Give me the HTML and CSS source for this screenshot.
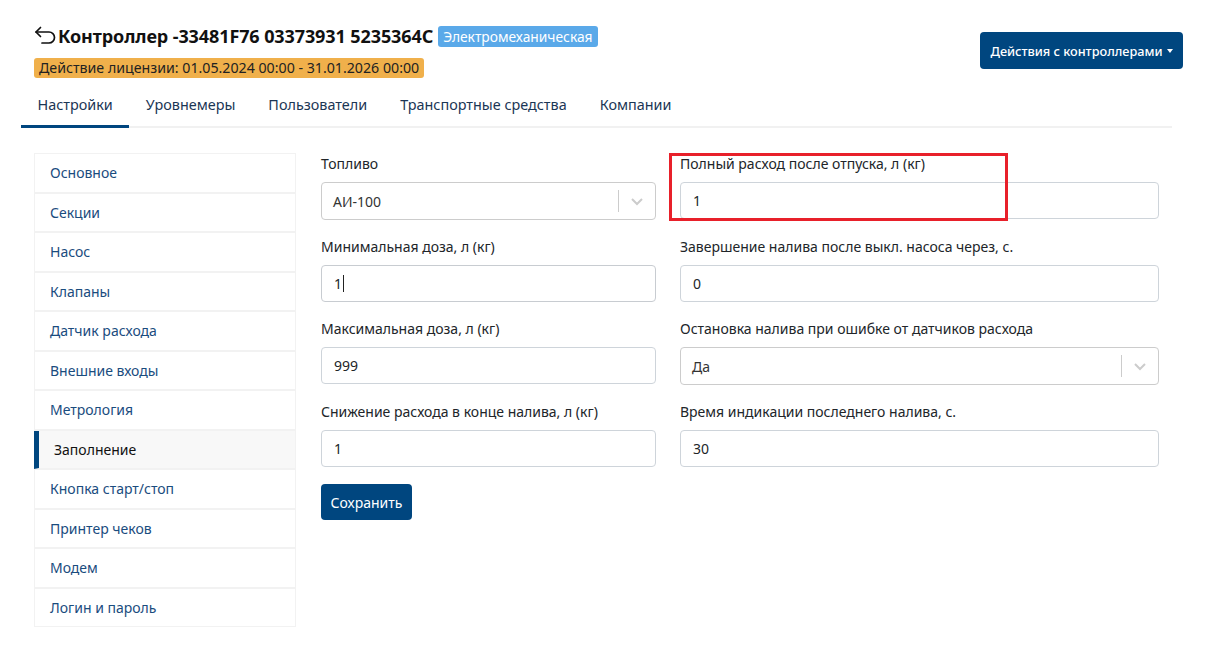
FILE: index.html
```html
<!DOCTYPE html>
<html lang="ru">
<head>
    <meta charset="UTF-8">
    <title>Контроллер</title>
    <link rel="stylesheet" href="styles.css">
</head>
<body>
    <div class="page">
        <div class="header">
            <div class="header-info">
                <div class="title-row">
                    <svg class="back-icon" width="23" height="20" viewBox="0 0 23 20" fill="none" stroke="#111" stroke-width="1.7" stroke-linecap="round" stroke-linejoin="round">
                        <path d="M2 6h13a5.5 5.5 0 0 1 0 11H8"/>
                        <path d="M6.5 1.5L2 6l4.5 4.5"/>
                    </svg>
                    <h1>Контроллер -33481F76 03373931 5235364C</h1>
                    <span class="badge badge-info">Электромеханическая</span>
                </div>
                <span class="badge badge-warning">Действие лицензии: 01.05.2024 00:00 - 31.01.2026 00:00</span>
            </div>
            <button class="btn btn-primary dropdown">Действия с контроллерами</button>
        </div>

        <div class="tabs">
            <a class="tab active">Настройки</a>
            <a class="tab">Уровнемеры</a>
            <a class="tab">Пользователи</a>
            <a class="tab">Транспортные средства</a>
            <a class="tab">Компании</a>
        </div>

        <div class="content">
            <ul class="side-menu">
                <li>Основное</li>
                <li>Секции</li>
                <li>Насос</li>
                <li>Клапаны</li>
                <li>Датчик расхода</li>
                <li>Внешние входы</li>
                <li>Метрология</li>
                <li class="active">Заполнение</li>
                <li>Кнопка старт/стоп</li>
                <li>Принтер чеков</li>
                <li>Модем</li>
                <li>Логин и пароль</li>
            </ul>

            <form class="settings-form">
                <div class="form-grid">
                    <div class="form-group">
                        <label>Топливо</label>
                        <div class="select">
                            <span class="select-value">АИ-100</span>
                            <span class="select-sep"></span>
                            <svg class="select-arrow" width="20" height="20" viewBox="0 0 20 20"><path d="M5 8l5 5 5-5" fill="none" stroke="#ccc" stroke-width="2"/></svg>
                        </div>
                    </div>
                    <div class="form-group">
                        <label>Полный расход после отпуска, л (кг)</label>
                        <input class="input" type="text" value="1">
                        <div class="highlight-box"></div>
                    </div>

                    <div class="form-group">
                        <label>Минимальная доза, л (кг)</label>
                        <div class="input focused">1<span class="caret"></span></div>
                    </div>
                    <div class="form-group">
                        <label>Завершение налива после выкл. насоса через, с.</label>
                        <input class="input" type="text" value="0">
                    </div>

                    <div class="form-group">
                        <label>Максимальная доза, л (кг)</label>
                        <input class="input" type="text" value="999">
                    </div>
                    <div class="form-group">
                        <label>Остановка налива при ошибке от датчиков расхода</label>
                        <div class="select">
                            <span class="select-value">Да</span>
                            <span class="select-sep"></span>
                            <svg class="select-arrow" width="20" height="20" viewBox="0 0 20 20"><path d="M5 8l5 5 5-5" fill="none" stroke="#ccc" stroke-width="2"/></svg>
                        </div>
                    </div>

                    <div class="form-group">
                        <label>Снижение расхода в конце налива, л (кг)</label>
                        <input class="input" type="text" value="1">
                    </div>
                    <div class="form-group">
                        <label>Время индикации последнего налива, с.</label>
                        <input class="input" type="text" value="30">
                    </div>
                </div>
                <button type="button" class="btn btn-primary">Сохранить</button>
            </form>
        </div>
    </div>
</body>
</html>
```

FILE: styles.css
```css
body {
    margin: 0;
    font-family: "Noto Sans", "Open Sans", sans-serif;
    color: #212529;
    background: #fff;
}
.page {
    padding: 22px 30px 0 21px;
}
.header {
    display: flex;
    justify-content: space-between;
    align-items: flex-start;
    padding-left: 13px;
}
.header-info {
    display: flex;
    flex-direction: column;
    align-items: flex-start;
}
.title-row {
    display: flex;
    align-items: center;
    height: 28px;
}
.back-icon {
    margin-right: 1px;
}
h1 {
    margin: 0;
    font-size: 18px;
    font-weight: 700;
    letter-spacing: -0.1px;
    color: #111;
}
.badge {
    display: inline-block;
    border-radius: 3px;
    white-space: nowrap;
}
.badge-info {
    background: #5aa9e9;
    color: #fff;
    margin-left: 5px;
    padding: 0 5px;
    font-size: 13.8px;
    line-height: 21px;
}
.badge-warning {
    background: #f0b04b;
    color: #222;
    margin-top: 8px;
    padding: 0 5px;
    font-size: 14.2px;
    line-height: 20px;
}
.btn {
    font-family: inherit;
    border: none;
    border-radius: 4px;
    cursor: pointer;
    color: #fff;
    white-space: nowrap;
}
.btn-primary {
    background: #00467f;
}
.dropdown {
    margin-top: 10px;
    height: 37px;
    width: 203px;
    padding: 0;
    font-size: 12.7px;
    font-weight: 500;
}
.dropdown::after {
    content: "";
    display: inline-block;
    margin-left: 4px;
    vertical-align: 3px;
    border-top: 4px solid #fff;
    border-left: 3.5px solid transparent;
    border-right: 3.5px solid transparent;
}
.tabs {
    display: flex;
    margin-top: 10px;
    margin-right: 11px;
    border-bottom: 2px solid #f1f1f1;
}
.tab {
    padding: 0 16.5px;
    height: 37px;
    line-height: 33px;
    font-size: 14.4px;
    color: #1b3655;
    border-bottom: 3px solid transparent;
    margin-bottom: -2px;
}
.tab.active {
    border-bottom-color: #00467f;
}
.content {
    display: flex;
    padding: 25px 24px 30px 13px;
    gap: 25px;
}
.side-menu {
    list-style: none;
    margin: 0;
    padding: 0;
    width: 262px;
    flex-shrink: 0;
}
.side-menu li {
    height: 37.5px;
    line-height: 37.5px;
    padding-left: 15px;
    font-size: 14px;
    color: #1a4c7e;
    border: 1px solid #f2f2f2;
}
.side-menu li + li {
    border-top: none;
    box-shadow: 0 -1px 0 #f2f2f2;
    margin-top: 1px;
}
.side-menu li.active {
    background: #f8f8f8;
    color: #111;
    border-left: 5px solid #00467f;
    padding-left: 15px;
}
.settings-form {
    flex: 1;
}
.form-grid {
    display: grid;
    grid-template-columns: 335fr 479fr;
    column-gap: 24px;
}
.form-group {
    position: relative;
    margin-bottom: 16px;
}
.form-group label {
    display: block;
    font-size: 14px;
    line-height: 21px;
    margin-bottom: 8px;
}
.input {
    box-sizing: border-box;
    display: block;
    width: 100%;
    height: 37px;
    padding: 0 12px;
    border: 1px solid #ced4da;
    border-radius: 4px;
    font-family: inherit;
    font-size: 14px;
    line-height: 35px;
    color: #212529;
    background: #fff;
}
.input.focused {
    border-color: #c8ccd1;
}
.caret {
    display: inline-block;
    width: 1px;
    height: 17px;
    background: #222;
    vertical-align: -3px;
    margin-left: 1px;
}
.select {
    box-sizing: border-box;
    display: flex;
    align-items: center;
    height: 38px;
    border: 1px solid #ccc;
    border-radius: 4px;
    padding-left: 11px;
    font-size: 14px;
}
.select-value {
    flex: 1;
    color: #333;
}
.select-sep {
    width: 1px;
    height: 22px;
    background: #ccc;
}
.select-arrow {
    margin: 0 8px;
}
.highlight-box {
    position: absolute;
    left: -11px;
    top: 0;
    width: 333px;
    height: 62px;
    border: 3px solid #e8202a;
    pointer-events: none;
}
.settings-form .btn {
    width: 91px;
    height: 36px;
    margin-top: 1px;
    font-size: 14px;
}
```
